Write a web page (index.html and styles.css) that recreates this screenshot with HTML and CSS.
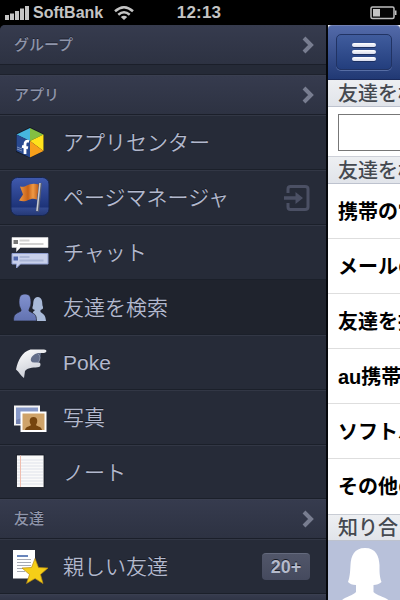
FILE: index.html
```
<!DOCTYPE html>
<html lang="ja">
<head>
<meta charset="utf-8">
<title>Menu</title>
<link rel="stylesheet" href="styles.css">
</head>
<body>
<div class="phone">
  <header class="status">
    <div class="carrier">
      <svg class="signal" width="25" height="14" viewBox="0 0 25 14" fill="#c4c4c4"><path d="M0 9h4v5H0zM5 7.500h4V14H5zM10 5h4v9h-4zM15 2.500h4V14h-4zM20 0h4v14h-4z"/></svg>
      <span class="carrier-name">SoftBank</span>
      <svg class="wifi" width="20" height="14" viewBox="0 0 20 14" fill="none" stroke="#c4c4c4" stroke-width="2.500"><path d="M1 5.300Q10-2.700 19 5.300M4.300 8.700Q10 3.700 15.700 8.700"/><path d="M6.800 11Q10 8.300 13.200 11L10 14z" fill="#c4c4c4" stroke="none"/></svg>
    </div>
    <span class="clock">12:13</span>
    <svg class="battery" width="27" height="14" viewBox="0 0 27 14"><rect x="1" y="1" width="23" height="11.500" rx="1.500" fill="#050505" stroke="#bdbdbd" stroke-width="1.500"/><path d="M3 3h7v7.500H3zM25 4.500h1.500v4.500H25z" fill="#c4c4c4"/></svg>
  </header>
  <div class="content">
    <nav class="menu">
      <div class="section first"><span>グループ</span><svg class="chev" width="12" height="18" viewBox="0 0 12 18"><path d="M2 2l7 7-7 7"/></svg></div>
      <div class="gap"></div>
      <div class="section"><span>アプリ</span><svg class="chev" width="12" height="18" viewBox="0 0 12 18"><path d="M2 2l7 7-7 7"/></svg></div>
      <div class="item">
        <svg class="icon" width="44" height="44" viewBox="0 0 44 44"><path d="M22 6l14 7v17l-14 7-14-6V13z" fill="#111722"/><path d="M22 7L8.500 13.500 22 20z" fill="#46b7df"/><path d="M22 7l13.500 6.500L22 20z" fill="#83bf42"/><path d="M8.500 13.500L22 20v16.500L8.500 30z" fill="#29498f"/><path d="M35.500 13.500V30L22 20z" fill="#ffe21b"/><path d="M22 20l13.500 10L22 36.500z" fill="#f8a01b"/><path d="M9 28l5 2M9 26l5 2" stroke="#8093bd"/><path d="M21 20.500c-3-1-4 .5-4 3v9.500M14 25.300l6 1.500" fill="none" stroke="#fff" stroke-width="2.800"/></svg>
        <span>アプリセンター</span>
      </div>
      <div class="item">
        <svg class="icon" width="44" height="44" viewBox="0 0 44 44"><defs><linearGradient id="blue" x2="0" y2="1"><stop stop-color="#405aae"/><stop offset=".78" stop-color="#1d3378"/><stop offset=".8" stop-color="#344b92"/><stop offset="1" stop-color="#243875"/></linearGradient><linearGradient id="orange"><stop stop-color="#f09a45"/><stop offset=".45" stop-color="#c76218"/><stop offset=".7" stop-color="#f09a45"/><stop offset="1" stop-color="#b65515"/></linearGradient></defs><g transform="translate(0 -1.500)"><rect x="3" y="3" width="38" height="38" rx="6.500" fill="url(#blue)" stroke="#17264f"/><path d="M12 12c6 2 8-5 19-2l-2 15c-8-3-9 4-18 1l4-6z" fill="url(#orange)"/><path d="M32.500 8.500l-3 28.500" stroke="#565c70" stroke-width="3"/><path d="M32 8.500l-3 28" stroke="#c9ccd3" stroke-width="1.500"/></g></svg>
        <span>ページマネージャ</span>
        <svg class="enter" width="27" height="28" viewBox="0 0 27 28"><path d="M4 9V5q0-2.500 2.500-2.500H21q3 0 3 2.500v18q0 2.500-3 2.500H6.500Q4 25.500 4 23v-4" fill="none" stroke="#4b5064" stroke-width="3"/><path d="M0 12.300h11.500V8l7.500 6-7.500 6v-4.300H0z" fill="#4b5064"/></svg>
      </div>
      <div class="item">
        <svg class="icon" width="44" height="44" viewBox="0 0 44 44"><g transform="translate(0 2)"><path d="M4 4.500h36v10H12.500l-4 4v-4H4z" fill="#fff" stroke="#ddd" stroke-width=".6"/><path d="M5.500 7h4.500v4H5.500z" fill="#777"/><path d="M11.500 7.500h10M11.500 11h24" stroke="#d2d2d2" stroke-width="2"/><path d="M4 20.500h36V31H12.500l-4 4v-4H4z" fill="#c8d0eb" stroke="#8f9ed0"/><path d="M5.500 23.500h4.500v4H5.500z" fill="#4f66ac"/><path d="M11.500 24h10M11.500 27.500h24" stroke="#aab5d6" stroke-width="2"/></g></svg>
        <span>チャット</span>
      </div>
      <div class="item selected">
        <svg class="icon" width="44" height="44" viewBox="0 0 44 44"><defs><linearGradient id="man" x2="0" y2="1"><stop stop-color="#8292cf"/><stop offset="1" stop-color="#6272b0"/></linearGradient></defs><path d="M25 35v-9l2-2c-2-1-3-1-2.500-3 1-2 .5-4 1-6 1-5.500 7.500-5.500 8.500 0 .5 2 0 4 1 6 .5 2-1 2-2.500 3v2c3 2 5 3 5.500 9z" fill="#a9bad8"/><path d="M5.500 35c0-7 2-7 7.500-10 .5-2-2-4-2-8 0-5 .5-9 6-9s6 4 6 9c0 4-2.500 6-2 8 5.500 3 7.500 3 7.500 10z" fill="url(#man)" stroke="#1f232d" stroke-width=".7"/></svg>
        <span>友達を検索</span>
      </div>
      <div class="item">
        <svg class="icon" width="44" height="44" viewBox="0 0 44 44"><defs><linearGradient id="hand" x2=".4" y2="1"><stop stop-color="#fff"/><stop offset="1" stop-color="#c9ccd5"/></linearGradient></defs><path d="M23 13q8-4 10-1l-2 10h-9z" fill="#626d89"/><path d="M8 28.500C10 19 14 11 22.500 8.500H36q2.500 0 2.500 1.500T36 12h-6c-4 1-8 4-7 8q1 2 4.500 1.500H31q1.500 0 1.500 2T31 26c-4 .8-11 0-14 4l-1 7c-3-2-5-6-8-8.500z" fill="url(#hand)"/><path d="M30 13q4 3 0 9" fill="none" stroke="#8b94aa"/></svg>
        <span class="latin">Poke</span>
      </div>
      <div class="item">
        <svg class="icon" width="44" height="44" viewBox="0 0 44 44"><g transform="translate(0 4)"><rect x="7" y="6.500" width="24" height="18" fill="#8799c8" stroke="#f5f5f5" stroke-width="2"/><path d="M8 20q10-5 22-1v5H8z" fill="#7381af"/><rect x="13.500" y="12.500" width="24" height="18.500" fill="#cfa369" stroke="#fff" stroke-width="2"/><path d="M17 30c1-4 4-3 6-5-2-3-2-8 2.500-8s4.500 5 2.500 8c2 2 5 1 6 5z" fill="#76450f"/></g></svg>
        <span>写真</span>
      </div>
      <div class="item last">
        <svg class="icon" width="44" height="44" viewBox="0 0 44 44"><rect x="8.500" y="5" width="27.500" height="32.500" fill="#fafafa" stroke="#11151e" stroke-width=".8"/><path d="M9 10h26M9 13h26M9 16h26M9 19h26M9 22h26M9 25h26M9 28h26M9 31h26M9 34h26" stroke="#dfe2ea"/><path d="M12.500 5.500v31.500" stroke="#efbeb0"/></svg>
        <span>ノート</span>
      </div>
      <div class="section"><span>友達</span><svg class="chev" width="12" height="18" viewBox="0 0 12 18"><path d="M2 2l7 7-7 7"/></svg></div>
      <div class="item">
        <svg class="icon" width="44" height="44" viewBox="0 0 44 44"><path d="M5 5h22v28.500H5z" fill="#fff"/><path d="M9 11h11" stroke="#365da5" stroke-width="1.500"/><path d="M9 14.500h14M9 17.500h14M9 20.500h14M9 23.500h10M9 26.500h8" stroke="#a7abb5"/><path d="M27 13.500l3.500 9 9.500.5-7.500 6.500 2.500 9-8-5-8.500 5 3-9-7.500-6.500 9.500-.5z" fill="#f5ce17" stroke="#b88a12" stroke-width=".7"/></svg>
        <span>親しい友達</span><b class="count">20+</b>
      </div>
      <div class="section tail"></div>
    </nav>
    <main class="page">
      <div class="navbar"><div class="burger"><i></i><i></i><i></i></div></div>
      <h2 class="heading">友達を検索</h2>
      <div class="search"><div class="field"></div></div>
      <h2 class="heading second">友達を検索</h2>
      <div class="row">携帯の電話帳</div>
      <div class="row">メールのアドレス帳</div>
      <div class="row">友達を招待</div>
      <div class="row">au携帯の電話帳</div>
      <div class="row">ソフトバンク</div>
      <div class="row final">その他のサービス</div>
      <h2 class="heading third">知り合いかも</h2>
      <div class="person"><svg width="73" height="61" viewBox="0 0 73 61"><rect width="73" height="61" fill="#b8c1da"/><path d="M37 7c11 0 14 8 14.500 17 0 8 0 11 2 17-2 2-5 3-8 3v7c4 4 13 5 17 10H12c4-5 12-6 16-10v-7c-4 0-6-1-8-3 2-6 2-9 2.500-17C23 15 26 7 37 7z" fill="#fff"/></svg></div>
    </main>
  </div>
</div>
</body>
</html>
```
FILE: styles.css
```
* { box-sizing: border-box; }
body { margin: 0; background: #000; font-family: "Liberation Sans", "Noto Sans CJK JP", sans-serif; }
.phone { width: 400px; height: 600px; overflow: hidden; }
.status { height: 25px; display: grid; grid-template-columns: 150px 98px 1fr; align-items: center; color: #c4c4c4; font-size: 16px; font-weight: bold; }
.carrier { display: flex; align-items: center; padding-left: 5px; }
.signal { margin-right: 3px; }
.carrier-name { width: 71px; font-size: 16px; letter-spacing: 0; }
.wifi { margin-left: 10px; }
.clock { text-align: center; font-size: 17px; letter-spacing: .2px; }
.battery { justify-self: end; margin-right: 3px; }
.content { display: flex; height: 575px; }
.menu { width: 328px; flex: none; background: #262b38; border-right: 2px solid #05070b; border-top-left-radius: 5px; overflow: hidden; }
.section { height: 40px; display: flex; align-items: center; justify-content: space-between; padding: 0 12px 1px 14px; background: linear-gradient(#363b4e, #2d3242); border-top: 1px solid #3a3f50; border-bottom: 1px solid #1b1f2a; color: #8f95aa; font-size: 15px; font-weight: 500; text-shadow: 0 -1px #202431; }
.section > span { padding-bottom: 2px; }
.section.first { border-top-color: #363b4d; }
.chev { fill: none; stroke: #787d90; stroke-width: 4; }
.gap { height: 10px; background: #252a37; border-bottom: 1px solid #1d212c; }
.item { height: 55px; display: flex; align-items: center; padding: 0 16px 0 8px; border-top: 1px solid #323745; border-bottom: 1px solid #1b202a; color: #b2b8cd; font-size: 21px; font-weight: 350; text-shadow: 0 -1px #171b25; }
.item > span { margin-left: 11px; padding-bottom: 3px; white-space: nowrap; }
.item > .latin { padding-bottom: 0; }
.icon { flex: none; }
.selected { background: #1f232d; border-top-color: #1f232d; }
.last { height: 54px; }
.enter { margin-left: auto; margin-right: -1px; }
.count { margin-left: auto; width: 48px; height: 27px; border-radius: 4px; background: linear-gradient(#515669, #454a5e); border-top: 1px solid #646a7d; text-align: center; font-size: 18px; font-weight: 700; line-height: 27px; color: #b5bacb; }
.tail { height: 10px; }
.page { width: 72px; background: #fff; overflow: hidden; }
.navbar { height: 55px; padding: 8px 8px 10px; background: linear-gradient(#536aa9, #213974); border-top: 1px solid #7181b4; border-bottom: 1px solid #19295b; border-radius: 4px 4px 0 0; }
.burger { height: 36px; width: 56px; padding: 8px 15px; border: 1px solid #213363; border-radius: 5px; background: linear-gradient(#405c9d, #233e7d); box-shadow: 0 1px #566da4; display: flex; flex-direction: column; gap: 3px; }
.burger i { height: 5px; border-radius: 2px; background: linear-gradient(#fff, #d7dbed); box-shadow: 0 1px #1c3061; }
.heading { margin: 0; height: 27px; padding-left: 10px; background: linear-gradient(#edeff2, #e1e4ea); border-bottom: 1px solid #bdc2ce; font-size: 20px; line-height: 29px; font-weight: 500; color: #454950; white-space: nowrap; overflow: hidden; }
.search { height: 49px; padding: 7px 0 5px 10px; }
.field { width: 90px; height: 37px; border: 1px solid #777; }
.second { height: 28px; border-top: 1px solid #cdd0d8; line-height: 28px; }
.third { height: 27px; border-top: 1px solid #c8ccd4; line-height: 27px; }
.row { height: 55px; line-height: 57px; padding-left: 10px; border-bottom: 1px solid #dedede; color: #000; font-size: 20px; font-weight: 700; white-space: nowrap; overflow: hidden; }
.final { border-color: #fff; }
.person { height: 61px; }
.person svg { display: block; }
```
